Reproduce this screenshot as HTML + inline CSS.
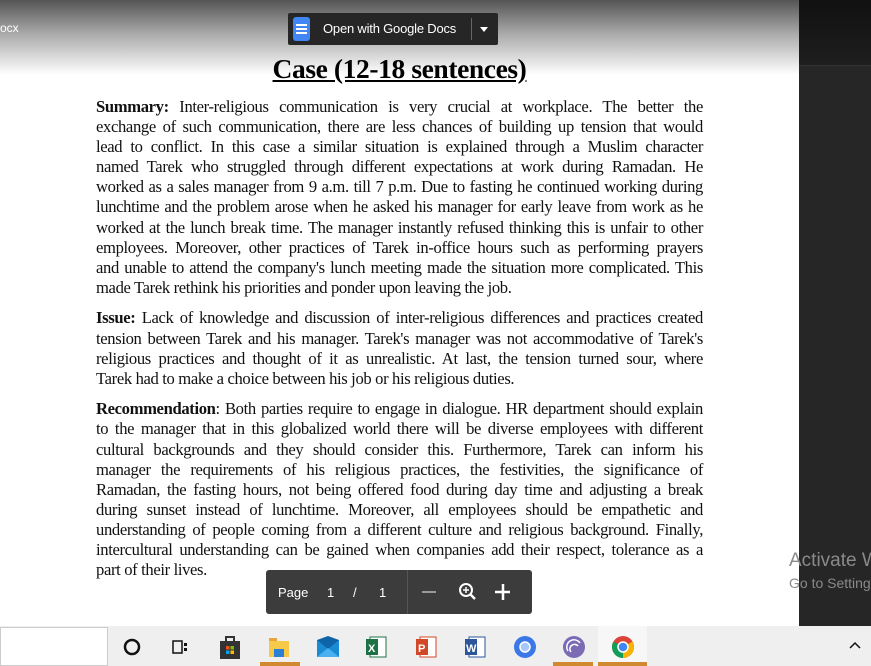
<!DOCTYPE html>
<html><head><meta charset="utf-8"><style>
*{margin:0;padding:0;box-sizing:border-box}
body{width:871px;height:666px;overflow:hidden;position:relative;background:#fff;font-family:"Liberation Serif",serif}
#right{position:absolute;left:799px;top:0;width:72px;height:626px;background:#262626}
#righttop{position:absolute;left:799px;top:0;width:72px;height:66px;background:linear-gradient(#111,#1e1e1e);border-bottom:1px solid #333}
#grad{position:absolute;left:0;top:0;width:799px;height:75px;background:linear-gradient(#555 0%,#aaa 45%,rgba(255,255,255,0) 100%);}
.docx{position:absolute;left:0;top:21px;color:#fff;font:12px "Liberation Sans",sans-serif}
#btn{position:absolute;left:288px;top:13px;width:210px;height:32px;background:#262626;border-radius:2px;color:#fff;font:13px "Liberation Sans",sans-serif}
#btn .ic{position:absolute;left:5px;top:4px;width:17px;height:24px;background:#4285f4;border-radius:3px}
#btn .ic i{position:absolute;left:3px;width:11px;height:2px;background:#fff}
#btn .t{position:absolute;left:35px;top:8px;letter-spacing:-0.2px}
#btn .sep{position:absolute;left:183px;top:5px;width:1px;height:22px;background:#666}
#btn .ar{position:absolute;left:192px;top:14px;border:4px solid transparent;border-top:5px solid #fff}
h1{position:absolute;left:0;width:799px;top:53px;text-align:center;font-size:27.5px;font-weight:bold;text-decoration:underline;color:#000;letter-spacing:-0.4px}
#doc{position:absolute;left:96px;top:97px;width:607px;font-size:16.6px;line-height:20.1px;color:#111;letter-spacing:-0.35px}
#doc p{margin-bottom:10.5px}
#doc p span{display:block;white-space:nowrap;text-align:justify;text-align-last:justify}
#doc p span.l{text-align-last:left}
#act{position:absolute;left:789px;top:550px;color:#8a8a8a;font:19px "Liberation Sans",sans-serif;white-space:nowrap}
#act2{position:absolute;left:789px;top:575px;color:#8a8a8a;font:14px "Liberation Sans",sans-serif;white-space:nowrap}
#pg{position:absolute;left:266px;top:570px;width:266px;height:44px;background:#3c3c3c;border-radius:3px;color:#fff;font:13px "Liberation Sans",sans-serif}
#pg span{position:absolute;top:15px}
#pg .sep{position:absolute;left:141px;top:0;width:1px;height:44px;background:#555}
#tb{position:absolute;left:0;top:626px;width:871px;height:40px;background:#efefef}
#search{position:absolute;left:0;top:627px;width:108px;height:39px;background:#fff;border:1px solid #ccc}
.ti{position:absolute;top:635px;width:24px;height:24px}
.ul{position:absolute;top:662px;height:4px;background:#d0892e}
</style></head><body>
<div id="grad"></div>
<div id="right"></div><div id="righttop"></div>
<div class="docx">ocx</div>
<div id="btn"><div class="ic"><i style="top:7px"></i><i style="top:11px"></i><i style="top:15px"></i></div><span class="t">Open with Google Docs</span><div class="sep"></div><div class="ar"></div></div>
<h1>Case (12-18 sentences)</h1>
<div id="doc">
<p><span><b>Summary:</b> Inter-religious communication is very crucial at workplace. The better the</span>
<span>exchange of such communication, there are less chances of building up tension that would</span>
<span>lead to conflict. In this case a similar situation is explained through a Muslim character</span>
<span>named Tarek who struggled through different expectations at work during Ramadan. He</span>
<span>worked as a sales manager from 9 a.m. till 7 p.m. Due to fasting he continued working during</span>
<span>lunchtime and the problem arose when he asked his manager for early leave from work as he</span>
<span>worked at the lunch break time. The manager instantly refused thinking this is unfair to other</span>
<span>employees. Moreover, other practices of Tarek in-office hours such as performing prayers</span>
<span>and unable to attend the company's lunch meeting made the situation more complicated. This</span>
<span class="l">made Tarek rethink his priorities and ponder upon leaving the job.</span></p>
<p><span><b>Issue:</b> Lack of knowledge and discussion of inter-religious differences and practices created</span>
<span>tension between Tarek and his manager. Tarek's manager was not accommodative of Tarek's</span>
<span>religious practices and thought of it as unrealistic. At last, the tension turned sour, where</span>
<span class="l">Tarek had to make a choice between his job or his religious duties.</span></p>
<p><span><b>Recommendation</b>: Both parties require to engage in dialogue. HR department should explain</span>
<span>to the manager that in this globalized world there will be diverse employees with different</span>
<span>cultural backgrounds and they should consider this. Furthermore, Tarek can inform his</span>
<span>manager the requirements of his religious practices, the festivities, the significance of</span>
<span>Ramadan, the fasting hours, not being offered food during day time and adjusting a break</span>
<span>during sunset instead of lunchtime. Moreover, all employees should be empathetic and</span>
<span>understanding of people coming from a different culture and religious background. Finally,</span>
<span>intercultural understanding can be gained when companies add their respect, tolerance as a</span>
<span class="l">part of their lives.</span></p>
</div>
<div id="act">Activate W</div><div id="act2">Go to Settings</div>
<div id="pg"><span style="left:12px">Page</span><span style="left:61px">1</span><span style="left:87px">/</span><span style="left:113px">1</span><div class="sep"></div>
<svg style="position:absolute;left:154px;top:12px" width="90" height="20"><line x1="2" y1="10" x2="16" y2="10" stroke="#999" stroke-width="2"/><circle cx="46" cy="8" r="6" fill="none" stroke="#fff" stroke-width="2"/><line x1="50" y1="12" x2="55" y2="17" stroke="#fff" stroke-width="2.5"/><line x1="43" y1="8" x2="49" y2="8" stroke="#fff" stroke-width="1.5"/><line x1="46" y1="5" x2="46" y2="11" stroke="#fff" stroke-width="1.5"/><line x1="83" y1="2" x2="83" y2="18" stroke="#fff" stroke-width="2.5"/><line x1="75" y1="10" x2="91" y2="10" stroke="#fff" stroke-width="2.5"/></svg></div>
<div id="tb"></div><div id="search"></div>
<svg class="ti" style="left:120px" viewBox="0 0 24 24"><circle cx="12" cy="12" r="7" fill="none" stroke="#111" stroke-width="2.5"/></svg>
<svg class="ti" style="left:168px" viewBox="0 0 24 24"><rect x="5" y="6" width="9" height="12" fill="none" stroke="#111" stroke-width="1.5"/><rect x="16" y="8" width="3" height="3" fill="#111"/><rect x="16" y="13" width="3" height="3" fill="#111"/></svg>
<svg class="ti" style="left:218px" viewBox="0 0 24 24"><rect x="2" y="6" width="20" height="18" fill="#333"/><path d="M8 6V2h8v4" fill="none" stroke="#333" stroke-width="2"/><rect x="8" y="11" width="3.5" height="3.5" fill="#f25022"/><rect x="12.5" y="11" width="3.5" height="3.5" fill="#7fba00"/><rect x="8" y="15.5" width="3.5" height="3.5" fill="#00a4ef"/><rect x="12.5" y="15.5" width="3.5" height="3.5" fill="#ffb900"/></svg>
<svg class="ti" style="left:267px" viewBox="0 0 24 24"><rect x="2" y="3" width="8" height="4" fill="#e8a33a"/><rect x="2" y="6" width="20" height="16" fill="#f7c948"/><rect x="7" y="14" width="10" height="8" fill="#2b7fd4"/></svg>
<div class="ul" style="left:260px;width:40px"></div>
<svg class="ti" style="left:316px" viewBox="0 0 24 24"><rect x="1" y="5" width="22" height="17" fill="#1a8ad4"/><path d="M1 5l11 -4 11 4 -11 9z" fill="#0f64a8"/><path d="M1 22l11-9 11 9z" fill="#49b1f0"/></svg>
<svg class="ti" style="left:364px" viewBox="0 0 24 24"><rect x="6" y="2" width="16" height="20" fill="#fff" stroke="#1e7145"/><rect x="2" y="4" width="12" height="16" fill="#1e7145"/><text x="4" y="17" fill="#fff" font-size="11" font-family="Liberation Sans" font-weight="bold">X</text></svg>
<svg class="ti" style="left:414px" viewBox="0 0 24 24"><rect x="6" y="2" width="16" height="20" fill="#fff" stroke="#d24726"/><rect x="2" y="4" width="12" height="16" fill="#d24726"/><text x="4" y="17" fill="#fff" font-size="11" font-family="Liberation Sans" font-weight="bold">P</text></svg>
<svg class="ti" style="left:463px" viewBox="0 0 24 24"><rect x="6" y="2" width="16" height="20" fill="#fff" stroke="#2b579a"/><rect x="2" y="4" width="12" height="16" fill="#2b579a"/><text x="3" y="17" fill="#fff" font-size="11" font-family="Liberation Sans" font-weight="bold">W</text></svg>
<svg class="ti" style="left:513px" viewBox="0 0 24 24"><circle cx="12" cy="12" r="11" fill="#3b78e7"/><circle cx="12" cy="12" r="5" fill="#a8c7fa" stroke="#fff" stroke-width="1.5"/></svg>
<svg class="ti" style="left:562px" viewBox="0 0 24 24"><circle cx="12" cy="12" r="11" fill="#7b6bb5"/><path d="M6 16a7 7 0 0 1 12-8M9 17a4 4 0 0 1 7-6" fill="none" stroke="#fff" stroke-width="1.5"/></svg>
<div class="ul" style="left:553px;width:40px"></div>
<div style="position:absolute;left:598px;top:626px;width:49px;height:40px;background:#f7f7f7"></div>
<svg class="ti" style="left:611px" viewBox="0 0 24 24"><circle cx="12" cy="12" r="11" fill="#db4437"/><path d="M12 12L2.5 6.5A11 11 0 0 0 12 23z" fill="#0f9d58"/><path d="M12 12L21.5 6.5A11 11 0 0 1 12 23z" fill="#f4b400"/><circle cx="12" cy="12" r="5" fill="#4285f4" stroke="#fff" stroke-width="1.5"/></svg>
<div class="ul" style="left:598px;width:49px"></div>
<svg style="position:absolute;left:849px;top:640px" width="12" height="10"><path d="M1 8l5-5 5 5" fill="none" stroke="#111" stroke-width="1.5"/></svg>
</body></html>
